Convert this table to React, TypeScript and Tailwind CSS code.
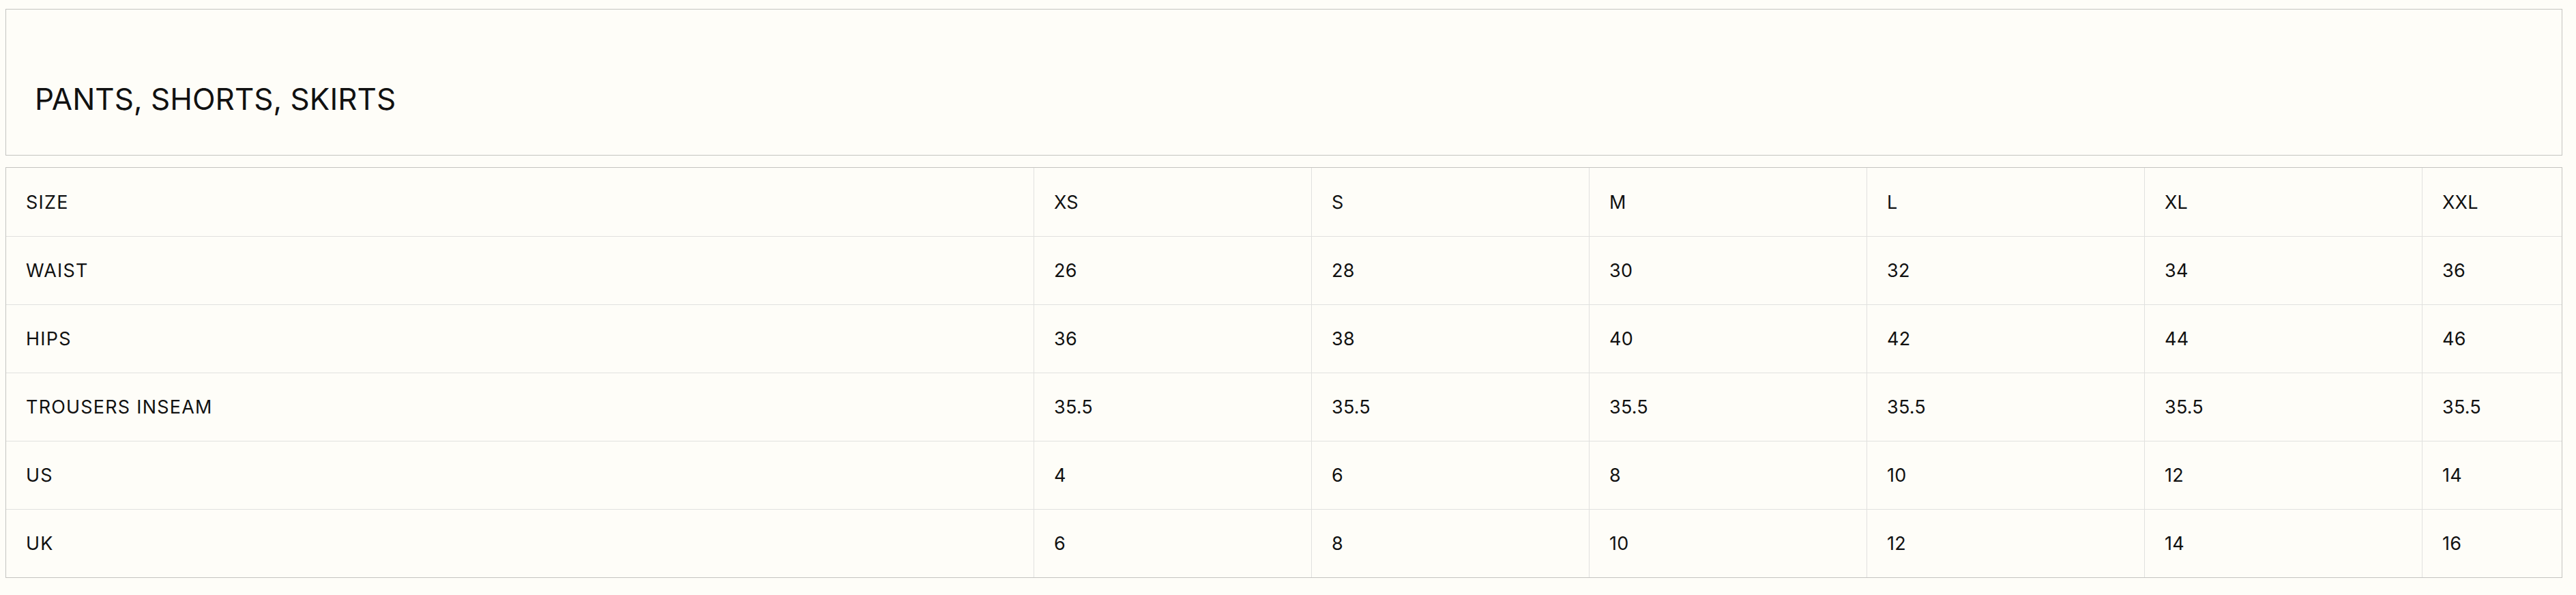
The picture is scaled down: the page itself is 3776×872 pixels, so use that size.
const sizes = ["XS", "S", "M", "L", "XL", "XXL"];

const rows: { label: string; values: string[] }[] = [
    { label: "SIZE", values: sizes },
    { label: "WAIST", values: ["26", "28", "30", "32", "34", "36"] },
    { label: "HIPS", values: ["36", "38", "40", "42", "44", "46"] },
    { label: "TROUSERS INSEAM", values: ["35.5", "35.5", "35.5", "35.5", "35.5", "35.5"] },
    { label: "US", values: ["4", "6", "8", "10", "12", "14"] },
    { label: "UK", values: ["6", "8", "10", "12", "14", "16"] },
];

export default function App() {
    return (
        <div
            className="min-h-[872px] w-full bg-[#fefdf8] pt-[13px] pl-[8px] text-[#111111]"
            style={{ fontFamily: "Inter, 'Liberation Sans', sans-serif" }}
        >
            <div className="w-[3748px]">
                <div className="h-[215px] border border-[#c4c4c0] pl-[42px] pt-[109px]">
                    <h2 className="text-[44px] leading-none font-normal">PANTS, SHORTS, SKIRTS</h2>
                </div>

                <div className="mt-[17px] border border-[#c4c4c0]">
                    {rows.map((row, i) => (
                        <div
                            key={row.label}
                            className={[
                                "grid h-[100px] grid-cols-[1506px_407px_407px_407px_407px_407px_1fr] text-[27px] leading-none",
                                i > 0 ? "border-t border-[#e1e1df]" : "",
                            ].join(" ")}
                        >
                            <div className="flex items-center pl-[29px] tracking-[1.2px]">{row.label}</div>
                            {row.values.map((v, j) => (
                                <div key={j} className="flex items-center border-l border-[#e1e1df] pl-[29px] tracking-[0.2px]">
                                    {v}
                                </div>
                            ))}
                        </div>
                    ))}
                </div>
            </div>
        </div>
    );
}
